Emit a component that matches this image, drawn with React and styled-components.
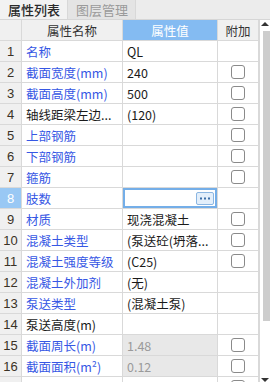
import styled, { createGlobalStyle } from "styled-components";

const GlobalStyle = createGlobalStyle`
  html, body {
    margin: 0;
    padding: 0;
    background: #ffffff;
  }
  body {
    font-family: "Noto Sans CJK SC", "Liberation Sans", sans-serif;
  }
`;

const Panel = styled.div`
  width: 270px;
  height: 382px;
  overflow: hidden;
  display: flex;
  flex-direction: column;
  background: #ffffff;
`;

const TabBar = styled.div`
  height: 19px;
  display: flex;
  background: #ececec;
  border-bottom: 1px solid #d6d6d6;
  box-sizing: content-box;
`;

const Tab = styled.div`
  padding: 0 7px 0 8px;
  height: 19px;
  display: flex;
  align-items: center;
  font-size: 13px;
  font-weight: ${(p) => (p.$active ? 500 : 400)};
  color: ${(p) => (p.$active ? "#2a2a2a" : "#9a9a9a")};
  background: ${(p) => (p.$active ? "#f2f2f2" : "#e4e4e4")};
  border-right: 1px solid #d8d8d8;
`;

const Body = styled.div`
  flex: 1;
  display: flex;
  min-height: 0;
`;

const Grid = styled.div`
  display: grid;
  grid-template-columns: 22px 101px 95px 41px;
  grid-auto-rows: 21px;
  align-content: start;
`;

const Cell = styled.div`
  box-sizing: border-box;
  border-right: 1px solid #d9d9d9;
  border-bottom: 1px solid #d9d9d9;
  display: flex;
  align-items: center;
  font-size: 12.5px;
  white-space: nowrap;
  overflow: hidden;
  position: relative;
`;

const HeadCell = styled(Cell)`
  justify-content: center;
  background: ${(p) => (p.$hot ? "#84bbf2" : "#f0f0f0")};
  color: ${(p) => (p.$hot ? "#ffffff" : "#333")};
`;

const NumCell = styled(Cell)`
  justify-content: center;
  background: ${(p) => (p.$sel ? "#99c8f4" : "#f0f0f0")};
  color: ${(p) => (p.$sel ? "#ffffff" : "#3a3226")};
  font-family: "Liberation Sans", "Noto Sans", sans-serif;
  font-size: 13px;
`;

const NameCell = styled(Cell)`
  padding-left: 4px;
  color: ${(p) => (p.$plain ? "#1a1a1a" : "#3657e4")};
`;

const ValueCell = styled(Cell)`
  padding-left: 4px;
  color: ${(p) => (p.$dim ? "#9a9a9a" : "#1a1a1a")};
  background: ${(p) => (p.$dim ? "#e8e8e8" : "#ffffff")};
`;

const EditBox = styled.div`
  position: absolute;
  inset: 0;
  border: 2px solid #74aee8;
  display: flex;
  align-items: center;
  justify-content: flex-end;
  padding-right: 1px;
`;

const MoreButton = styled.div`
  width: 16px;
  height: 11px;
  border: 1px solid #8bb6e2;
  border-radius: 2px;
  background: #e3effb;
  display: flex;
  align-items: center;
  justify-content: center;
`;

const CheckCell = styled(Cell)`
  justify-content: center;
`;

const Check = styled.div`
  width: 12px;
  height: 12px;
  border: 1px solid #8a8a8a;
  border-radius: 3px;
  background: #fff;
`;

const ScrollBar = styled.div`
  flex: 1;
  border-left: 1px solid #d9d9d9;
  display: flex;
  flex-direction: column;
  align-items: flex-end;
  padding-top: 2px;
  background: #ffffff;
`;

const Arrow = styled.div`
  width: 0;
  height: 0;
  margin-right: 1px;
  border-left: 4px solid transparent;
  border-right: 4px solid transparent;
  border-${(p) => (p.$down ? "top" : "bottom")}: 4px solid #333;
`;

const Thumb = styled.div`
  width: 7px;
  height: 290px;
  margin-top: 5px;
  background: #cdcdcd;
`;

const Spacer = styled.div`
  flex: 1;
`;

const Dots = () => (
  <svg width="10" height="3" viewBox="0 0 10 3">
    <rect x="0" y="0.5" width="2" height="2" fill="#3d6fa8" />
    <rect x="4" y="0.5" width="2" height="2" fill="#3d6fa8" />
    <rect x="8" y="0.5" width="2" height="2" fill="#3d6fa8" />
  </svg>
);

const rows = [
  { name: "名称", value: "QL" },
  { name: "截面宽度(mm)", value: "240", check: true },
  { name: "截面高度(mm)", value: "500", check: true },
  { name: "轴线距梁左边...", value: "(120)", check: true, plain: true },
  { name: "上部钢筋", value: "", check: true },
  { name: "下部钢筋", value: "", check: true },
  { name: "箍筋", value: "", check: true },
  { name: "肢数", value: "", edit: true },
  { name: "材质", value: "现浇混凝土", check: true },
  { name: "混凝土类型", value: "(泵送砼(坍落...", check: true },
  { name: "混凝土强度等级", value: "(C25)", check: true },
  { name: "混凝土外加剂", value: "(无)" },
  { name: "泵送类型", value: "(混凝土泵)" },
  { name: "泵送高度(m)", value: "", plain: true },
  { name: "截面周长(m)", value: "1.48", check: true, dim: true },
  { name: "截面面积(m²)", value: "0.12", check: true, dim: true },
  { name: "", value: "", check: true, hideNum: true },
];

const App = () => {
  return (
    <Panel>
      <GlobalStyle />
      <TabBar>
        <Tab $active>属性列表</Tab>
        <Tab>图层管理</Tab>
      </TabBar>
      <Body>
        <Grid>
          <HeadCell />
          <HeadCell>属性名称</HeadCell>
          <HeadCell $hot>属性值</HeadCell>
          <HeadCell>附加</HeadCell>
          {rows.map((r, i) => [
            <NumCell key={"n" + i} $sel={r.edit}>{r.hideNum ? "" : i + 1}</NumCell>,
            <NameCell key={"a" + i} $plain={r.plain}>{r.name}</NameCell>,
            <ValueCell key={"v" + i} $dim={r.dim}>
              {r.value}
              {r.edit && (
                <EditBox>
                  <MoreButton>
                    <Dots />
                  </MoreButton>
                </EditBox>
              )}
            </ValueCell>,
            <CheckCell key={"c" + i}>{r.check && <Check />}</CheckCell>,
          ])}
        </Grid>
        <ScrollBar>
          <Arrow />
          <Thumb />
          <Spacer />
          <Arrow $down />
        </ScrollBar>
      </Body>
    </Panel>
  );
};

export default App;
